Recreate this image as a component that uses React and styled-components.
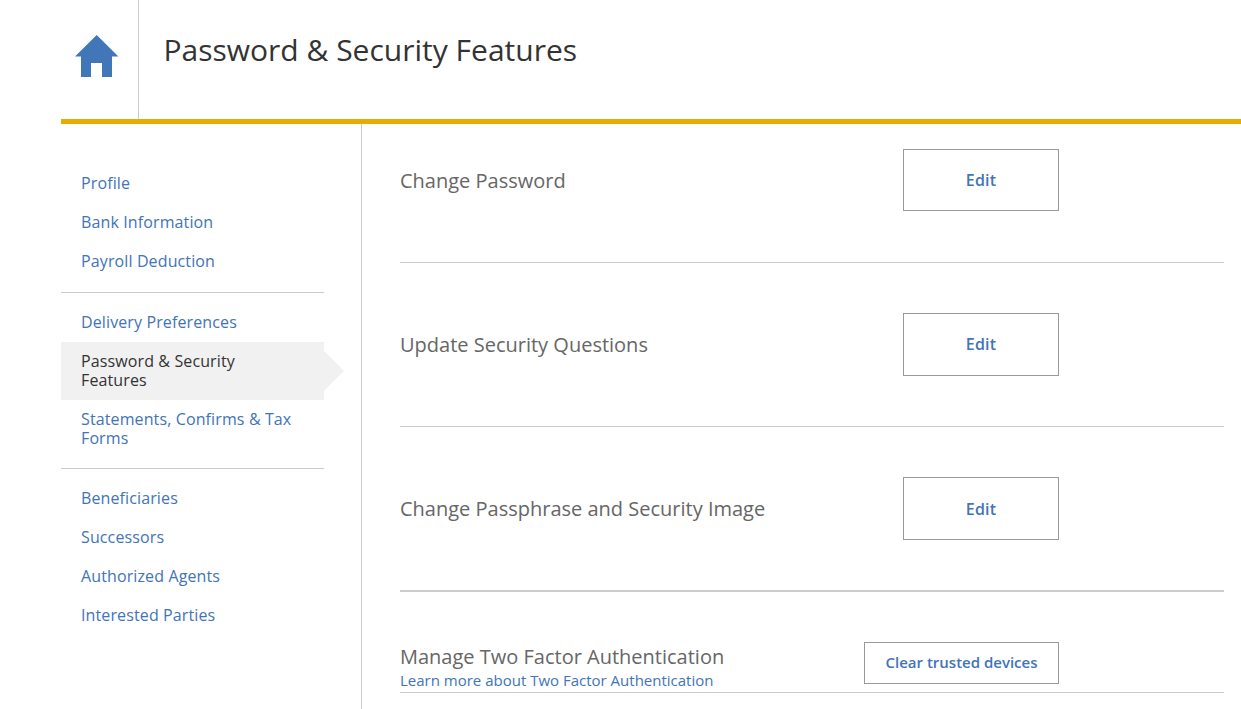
import React from "react";
import styled, { createGlobalStyle, css } from "styled-components";

const Global = createGlobalStyle`
  * { box-sizing: border-box; }
  body { margin: 0; background: #fff; overflow: hidden; font-family: "Open Sans", sans-serif; }
`;
const Page = styled.div`
  height: 709px;
  padding-left: 61px;
  display: flex;
  flex-direction: column;
  overflow: hidden;
`;
const Header = styled.header`
  display: flex;
  height: 124px;
  flex: none;
  border-bottom: 5px solid #e8ab00;
`;
const HomeLink = styled.a`
  width: 78px;
  border-right: 1px solid #ccc;
  padding: 35px 0 0 14px;
  svg { display: block; }
`;
const Title = styled.h1`
  margin: 0;
  padding: 29px 0 0 24.5px;
  font-size: 30px;
  line-height: 42px;
  font-weight: 400;
  color: #333;
  white-space: nowrap;
`;
const Body = styled.div`
  display: flex;
  flex: 1;
  min-height: 0;
`;
const Sidebar = styled.nav`
  width: 301px;
  flex: none;
  border-right: 1px solid #ccc;
  padding: 40px 37px 0 0;
`;
const Group = styled.div`
  padding-bottom: ${(p) => p.$bottom ?? 0}px;
  padding-top: ${(p) => p.$top ?? 0}px;
  & + & { border-top: 1px solid #ccc; }
`;
const NavItem = styled.a`
  display: block;
  position: relative;
  padding: 10px 26px 10px 20px;
  font-size: 16px;
  line-height: 19px;
  letter-spacing: 0.12px;
  color: #4174b8;
  ${(p) => p.$active && css`
    color: #333;
    background: #f1f1f1;
    &::after {
      content: "";
      position: absolute;
      left: 100%;
      top: 9px;
      border: 20px solid transparent;
      border-left-color: #f1f1f1;
      border-right: 0;
    }
  `}
`;
const Content = styled.main`
  flex: 1;
  padding: 0 17px 0 38px;
`;
const Row = styled.section`
  display: flex;
  justify-content: space-between;
  align-items: flex-start;
  height: ${(p) => p.$height}px;
  padding: ${(p) => p.$top}px 165px 0 0;
  border-bottom: ${(p) => p.$rule ?? 1}px solid #ccc;
`;
const Label = styled.h2`
  margin: ${(p) => p.$offset ?? 18}px 0 0;
  font-size: 20px;
  line-height: 27px;
  font-weight: 400;
  color: #666;
  white-space: nowrap;
`;
const HelpLink = styled.a`
  display: block;
  font-size: 15px;
  line-height: 20px;
  color: #4174b8;
  white-space: nowrap;
`;
const Button = styled.button`
  width: ${(p) => p.$width ?? 156}px;
  height: ${(p) => p.$height ?? 63}px;
  padding: 0 0 ${(p) => p.$lift ?? 0}px;
  border: 1px solid #999;
  background: #fff;
  font: 600 ${(p) => p.$size ?? 16}px "Open Sans", sans-serif;
  letter-spacing: ${(p) => p.$tracking ?? 0}px;
  color: #4174b8;
  white-space: nowrap;
`;

const groups = [
  { bottom: 11, items: ["Profile", "Bank Information", "Payroll Deduction"] },
  { top: 10, bottom: 10, items: ["Delivery Preferences", "Password & Security Features", "Statements, Confirms & Tax Forms"] },
  { top: 10, items: ["Beneficiaries", "Successors", "Authorized Agents", "Interested Parties"] },
];
const features = [
  { label: "Change Password", height: 139, top: 25, button: 62 },
  { label: "Update Security Questions", height: 164, top: 50, lift: 2 },
  { label: "Change Passphrase and Security Image", height: 165, top: 50, rule: 2 },
];

export default function App() {
  return (
    <Page>
      <Global />
      <Header>
        <HomeLink aria-label="Home">
          <svg width="44" height="42" viewBox="0 0 44 42" fill="#4176b9">
            <path d="M21.7 0 43.4 21.5H37V42H27V28H16V42H6V21.5H0Z" />
          </svg>
        </HomeLink>
        <Title>Password &amp; Security Features</Title>
      </Header>
      <Body>
        <Sidebar>
          {groups.map((g) => (
            <Group key={g.items[0]} $top={g.top} $bottom={g.bottom}>
              {g.items.map((t) => (
                <NavItem key={t} $active={t.startsWith("Password")}>{t}</NavItem>
              ))}
            </Group>
          ))}
        </Sidebar>
        <Content>
          {features.map((f) => (
            <Row key={f.label} $height={f.height} $top={f.top} $rule={f.rule}>
              <Label>{f.label}</Label>
              <Button $height={f.button} $lift={f.lift} $tracking={0.2}>Edit</Button>
            </Row>
          ))}
          <Row $height={101} $top={50}>
            <div>
              <Label $offset={1}>Manage Two Factor Authentication</Label>
              <HelpLink>Learn more about Two Factor Authentication</HelpLink>
            </div>
            <Button $width={195} $height={42} $size={15} $lift={2}>Clear trusted devices</Button>
          </Row>
        </Content>
      </Body>
    </Page>
  );
}
